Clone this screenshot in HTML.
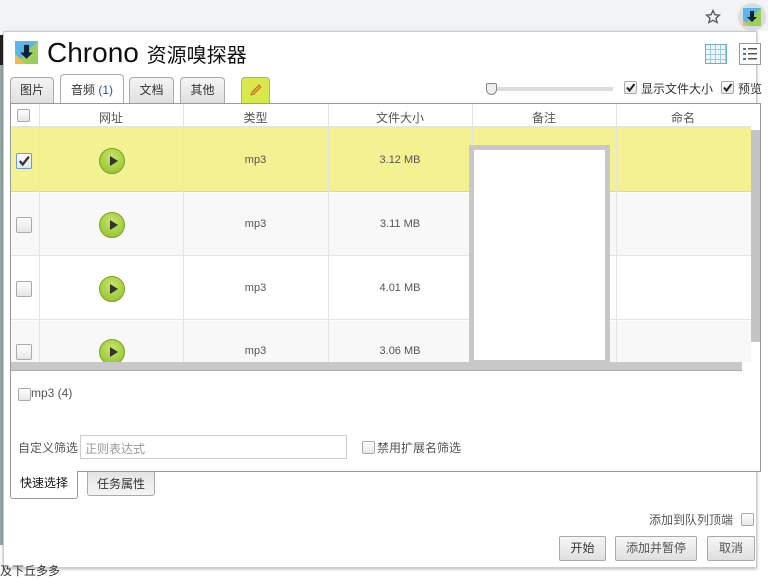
<!DOCTYPE html>
<html><head><meta charset="utf-8"><style>
*{margin:0;padding:0;box-sizing:border-box}
body{width:768px;height:576px;overflow:hidden;background:#fff;font-family:"Liberation Sans","Noto Sans CJK SC",sans-serif;font-size:12px;color:#333;position:relative}
.a{position:absolute}
.cb{position:absolute;width:13px;height:13px;border:1px solid #aaa;border-radius:2px;background:linear-gradient(#fff,#e6e6e6)}
.ck{position:absolute;width:13px;height:13px}
.tab{position:absolute;top:77px;height:26px;border:1px solid #aaa;border-bottom:none;border-radius:4px 4px 0 0;background:linear-gradient(#f4f4f4,#e0e0e0);text-align:center;line-height:25px;font-size:12px}
.btn{position:absolute;top:536px;height:25px;border:1px solid #aaa;border-radius:2px;background:linear-gradient(#f6f6f6,#e0e0e0);text-align:center;line-height:23px;font-size:12px}
.play{position:absolute;left:99px;width:26px;height:26px;border-radius:50%;background:radial-gradient(circle at 50% 35%,#c8e66a,#8cbf26);border:1px solid #7aa522}
.play:after{content:"";position:absolute;left:10px;top:7px;border-left:8px solid #333;border-top:5px solid transparent;border-bottom:5px solid transparent}
.cell{position:absolute;text-align:center;font-size:11px;color:#555}
</style></head><body>
<div class="a" style="left:0;top:0;width:768px;height:31px;background:#f1f3f4"></div>
<svg class="a" style="left:705px;top:9px" width="16" height="16" viewBox="0 0 16 16"><path d="M8 1.5l1.9 4.2 4.6.4-3.5 3 1.1 4.5L8 11.2 3.9 13.6 5 9.1 1.5 6.1l4.6-.4z" fill="none" stroke="#555" stroke-width="1.3"/></svg>
<div class="a" style="left:738px;top:3px;width:28px;height:28px;border-radius:50%;background:#dadce0"></div>
<svg class="a" style="left:743px;top:8px" width="18" height="18" viewBox="0 0 18 18"><rect width="18" height="18" fill="#58b7e8"/><path d="M0 18L18 0V18z" fill="#9bcf5a"/><path d="M0 18V12L6 18z" fill="#f5b84a"/><path d="M7 3h4v6h3l-5 5-5-5h3z" fill="#10203a"/></svg>
<div class="a" style="left:0;top:35px;width:3px;height:30px;background:#222"></div>
<div class="a" style="left:0;top:65px;width:3px;height:480px;background:#9aa"></div>
<div class="a" style="left:3px;top:31px;width:754px;height:537px;border:1px solid #ccc;background:#fff;box-shadow:0 1px 3px rgba(0,0,0,.3)"></div>
<div class="a" style="left:0;top:562px;font-size:12px;color:#333">及下丘多多</div>
<svg class="a" style="left:15px;top:41px" width="23" height="23" viewBox="0 0 18 18"><rect width="18" height="18" fill="#58b7e8"/><path d="M0 18L18 0V18z" fill="#9bcf5a"/><path d="M0 18V10L8 18z" fill="#f5b84a"/><path d="M7 3h4v6h3l-5 5-5-5h3z" fill="#10203a"/></svg>
<div class="a" style="left:47px;top:37px;font-size:28px;color:#111">Chrono <span style="font-size:20px">资源嗅探器</span></div>
<div class="a" style="left:705px;top:44px;width:22px;height:20px;border:1px solid #7ab;background:repeating-linear-gradient(90deg,transparent 0 4px,#9cd 4px 5px),repeating-linear-gradient(#eef6fc 0 4px,#9cd 4px 5px)"></div>
<svg class="a" style="left:739px;top:43px" width="22" height="22" viewBox="0 0 22 22"><rect x=".5" y=".5" width="21" height="21" fill="#fff" stroke="#999"/><g fill="#2a7bd0"><rect x="4" y="5" width="3" height="2"/><rect x="4" y="10" width="3" height="2"/><rect x="4" y="15" width="3" height="2"/></g><g fill="#555"><rect x="9" y="5" width="9" height="1.5"/><rect x="9" y="10" width="9" height="1.5"/><rect x="9" y="15" width="9" height="1.5"/></g></svg>
<div class="tab" style="left:10px;width:44px">图片</div>
<div class="tab" style="left:60px;width:64px;top:74px;height:29px;background:#fff;line-height:30px;z-index:2">音频 <span style="color:#2255aa">(1)</span></div>
<div class="tab" style="left:129px;width:45px">文档</div>
<div class="tab" style="left:180px;width:45px">其他</div>
<div class="tab" style="left:241px;width:29px;background:#d9e84a"></div>
<svg class="a" style="left:248px;top:82px" width="16" height="16" viewBox="0 0 16 16"><path d="M3 13l1-3 7-7 2 2-7 7z" fill="#f0a040" stroke="#c06020" stroke-width=".8"/></svg>
<div class="a" style="left:490px;top:87px;width:123px;height:4px;background:#ddd"></div>
<div class="a" style="left:486px;top:83px;width:11px;height:12px;border:1px solid #888;border-radius:2px 2px 6px 6px;background:#eee"></div>
<div class="cb" style="left:624px;top:81px"></div>
<svg class="ck" style="left:624px;top:81px" viewBox="0 0 13 13"><path d="M3 6.5l2.5 3L10.5 3" fill="none" stroke="#222" stroke-width="2"/></svg>
<div class="a" style="left:641px;top:80px">显示文件大小</div>
<div class="cb" style="left:721px;top:81px"></div>
<svg class="ck" style="left:721px;top:81px" viewBox="0 0 13 13"><path d="M3 6.5l2.5 3L10.5 3" fill="none" stroke="#222" stroke-width="2"/></svg>
<div class="a" style="left:738px;top:80px">预览</div>
<div class="a" style="left:10px;top:103px;width:751px;height:369px;border:1px solid #999;background:#fff"></div>
<div class="a" style="left:11px;top:104px;width:740px;height:24px;background:#fff;border-bottom:2px solid #e4e4e4"></div>
<div class="a" style="left:11px;top:128px;width:740px;height:64px;background:#f3f191;border-bottom:1px solid #dddc80"></div>
<div class="a" style="left:11px;top:193px;width:740px;height:63px;background:#f8f8f8;border-bottom:1px solid #e4e4e4"></div>
<div class="a" style="left:11px;top:257px;width:740px;height:63px;background:#fff;border-bottom:1px solid #e4e4e4"></div>
<div class="a" style="left:11px;top:321px;width:740px;height:41px;background:#f8f8f8"></div>
<div class="a" style="left:39px;top:104px;width:1px;height:258px;background:#e4e4e4"></div>
<div class="a" style="left:183px;top:104px;width:1px;height:258px;background:#e4e4e4"></div>
<div class="a" style="left:328px;top:104px;width:1px;height:258px;background:#e4e4e4"></div>
<div class="a" style="left:472px;top:104px;width:1px;height:258px;background:#e4e4e4"></div>
<div class="a" style="left:616px;top:104px;width:1px;height:258px;background:#e4e4e4"></div>
<div class="cb" style="left:17px;top:109px"></div>
<div class="cell" style="left:39px;top:109px;width:144px;font-size:12px">网址</div>
<div class="cell" style="left:183px;top:109px;width:145px;font-size:12px">类型</div>
<div class="cell" style="left:328px;top:109px;width:144px;font-size:12px">文件大小</div>
<div class="cell" style="left:472px;top:109px;width:144px;font-size:12px">备注</div>
<div class="cell" style="left:616px;top:109px;width:134px;font-size:12px">命名</div>
<div class="cb" style="left:16px;top:153px;width:16px;height:16px;border-color:#6a9ad0"></div>
<svg class="ck" style="left:17px;top:154px;width:14px;height:14px" viewBox="0 0 13 13"><path d="M2.5 6.5l2.8 3.2L11 2.5" fill="none" stroke="#333" stroke-width="2.2"/></svg>
<div class="play" style="top:148px"></div><div class="cell" style="left:183px;top:154px;width:145px">mp3</div><div class="cell" style="left:328px;top:154px;width:144px">3.12 MB</div>
<div class="cb" style="left:16px;top:217px;width:16px;height:16px"></div><div class="play" style="top:212px"></div><div class="cell" style="left:183px;top:218px;width:145px">mp3</div><div class="cell" style="left:328px;top:218px;width:144px">3.11 MB</div>
<div class="cb" style="left:16px;top:281px;width:16px;height:16px"></div><div class="play" style="top:276px"></div><div class="cell" style="left:183px;top:282px;width:145px">mp3</div><div class="cell" style="left:328px;top:282px;width:144px">4.01 MB</div>
<div class="cb" style="left:16px;top:344px;width:16px;height:16px"></div><div class="play" style="top:339px"></div><div class="cell" style="left:183px;top:345px;width:145px">mp3</div><div class="cell" style="left:328px;top:345px;width:144px">3.06 MB</div>
<div class="a" style="left:469px;top:145px;width:141px;height:220px;border:5px solid #c8c8c8;background:#fff"></div>
<div class="a" style="left:751px;top:130px;width:9px;height:212px;background:#c4c4c4"></div>
<div class="a" style="left:11px;top:362px;width:731px;height:9px;background:#c8c8c8;border-bottom:1px solid #aaa"></div>
<div class="cb" style="left:18px;top:388px"></div><div class="a" style="left:31px;top:386px;color:#555">mp3 (4)</div>
<div class="a" style="left:18px;top:439px;color:#555">自定义筛选</div>
<div class="a" style="left:80px;top:435px;width:267px;height:24px;border:1px solid #ccc;padding:4px 4px;color:#999">正则表达式</div>
<div class="cb" style="left:362px;top:441px"></div><div class="a" style="left:377px;top:439px;color:#555">禁用扩展名筛选</div>
<div class="a" style="left:10px;top:471px;width:68px;height:28px;border:1px solid #999;border-top:none;border-radius:0 0 3px 3px;background:#fff;text-align:center;line-height:24px;color:#111">快速选择</div>
<div class="a" style="left:87px;top:472px;width:68px;height:24px;border:1px solid #aaa;border-top:none;border-radius:0 0 3px 3px;background:linear-gradient(#e4e4e4,#f4f4f4);text-align:center;line-height:24px">任务属性</div>
<div class="a" style="left:649px;top:511px;color:#555">添加到队列顶端</div>
<div class="cb" style="left:741px;top:513px"></div>
<div class="btn" style="left:559px;width:47px">开始</div>
<div class="btn" style="left:615px;width:82px;color:#555">添加并暂停</div>
<div class="btn" style="left:707px;width:48px;color:#555">取消</div>
</body></html>
